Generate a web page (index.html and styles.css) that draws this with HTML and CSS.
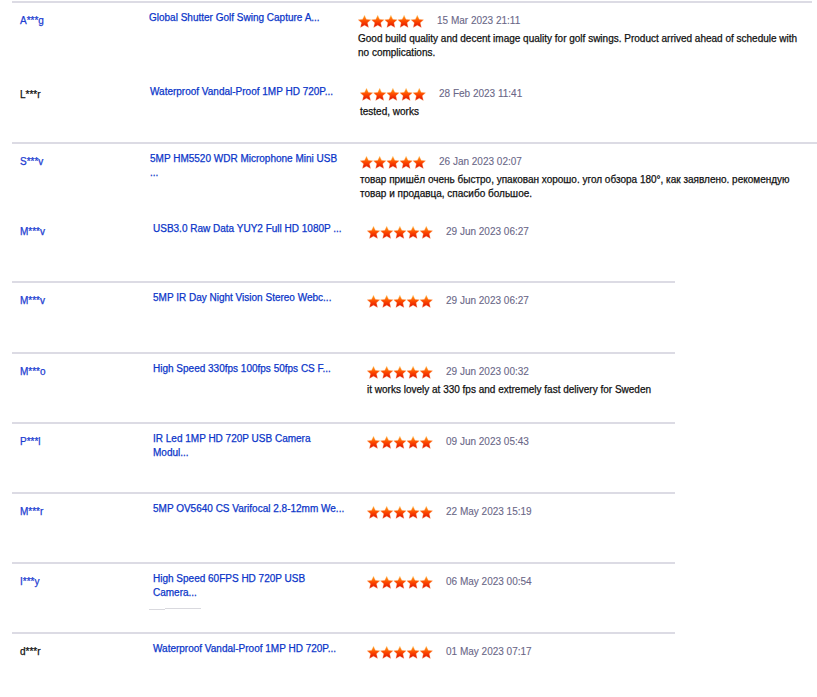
FILE: index.html
```html
<!DOCTYPE html>
<html>
<head>
<meta charset="utf-8">
<link rel="stylesheet" href="styles.css">
</head>
<body>
<svg class="defs" width="0" height="0" aria-hidden="true">
  <defs>
    <linearGradient id="sg" x1="0" y1="0" x2="0" y2="1">
      <stop offset="0" stop-color="#ffa817"/>
      <stop offset="0.45" stop-color="#ff4e00"/>
      <stop offset="1" stop-color="#dc0c00"/>
    </linearGradient>
    <symbol id="star" viewBox="0 0 13 13">
      <polygon points="6.5,0.2 8.4,4.3 12.9,4.8 9.55,7.85 10.55,12.6 6.5,10.2 2.45,12.6 3.45,7.85 0.1,4.8 4.6,4.3" fill="url(#sg)" stroke="#ffc892" stroke-width="0.35" stroke-linejoin="round"/>
    </symbol>
  </defs>
</svg>

<div class="feedback">

  <div class="row row--a lined w-800 h71">
    <div class="buyer">A***g</div>
    <div class="product"><a href="#">Global Shutter Golf Swing Capture A...</a></div>
    <div class="review">
      <div class="meta"><span class="stars"><svg viewBox="0 0 66 13"><use href="#star" x="0" width="13" height="13"/><use href="#star" x="13.2" width="13" height="13"/><use href="#star" x="26.4" width="13" height="13"/><use href="#star" x="39.6" width="13" height="13"/><use href="#star" x="52.8" width="13" height="13"/></svg></span><span class="date">15 Mar 2023 21:11</span></div>
      <p class="text">Good build quality and decent image quality for golf swings. Product arrived ahead of schedule with<br>no complications.</p>
    </div>
  </div>

  <div class="row row--b row--low h70">
    <div class="buyer buyer--dark">L***r</div>
    <div class="product"><a href="#">Waterproof Vandal-Proof 1MP HD 720P...</a></div>
    <div class="review">
      <div class="meta up1"><span class="stars"><svg viewBox="0 0 66 13"><use href="#star" x="0" width="13" height="13"/><use href="#star" x="13.2" width="13" height="13"/><use href="#star" x="26.4" width="13" height="13"/><use href="#star" x="39.6" width="13" height="13"/><use href="#star" x="52.8" width="13" height="13"/></svg></span><span class="date">28 Feb 2023 11:41</span></div>
      <p class="text">tested, works</p>
    </div>
  </div>

  <div class="row row--b lined w-full h70">
    <div class="buyer">S***v</div>
    <div class="product"><a href="#">5MP HM5520 WDR Microphone Mini USB<br>...</a></div>
    <div class="review">
      <div class="meta"><span class="stars"><svg viewBox="0 0 66 13"><use href="#star" x="0" width="13" height="13"/><use href="#star" x="13.2" width="13" height="13"/><use href="#star" x="26.4" width="13" height="13"/><use href="#star" x="39.6" width="13" height="13"/><use href="#star" x="52.8" width="13" height="13"/></svg></span><span class="date">26 Jan 2023 02:07</span></div>
      <p class="text">товар пришёл очень быстро, упакован хорошо. угол обзора 180°, как заявлено. рекомендую<br>товар и продавца, спасибо большое.</p>
    </div>
  </div>

  <div class="row row--c h69">
    <div class="buyer">M***v</div>
    <div class="product"><a href="#">USB3.0 Raw Data YUY2 Full HD 1080P ...</a></div>
    <div class="review">
      <div class="meta"><span class="stars"><svg viewBox="0 0 66 13"><use href="#star" x="0" width="13" height="13"/><use href="#star" x="13.2" width="13" height="13"/><use href="#star" x="26.4" width="13" height="13"/><use href="#star" x="39.6" width="13" height="13"/><use href="#star" x="52.8" width="13" height="13"/></svg></span><span class="date">29 Jun 2023 06:27</span></div>
    </div>
  </div>

  <div class="row row--c lined w-663 h71">
    <div class="buyer">M***v</div>
    <div class="product"><a href="#">5MP IR Day Night Vision Stereo Webc...</a></div>
    <div class="review">
      <div class="meta"><span class="stars"><svg viewBox="0 0 66 13"><use href="#star" x="0" width="13" height="13"/><use href="#star" x="13.2" width="13" height="13"/><use href="#star" x="26.4" width="13" height="13"/><use href="#star" x="39.6" width="13" height="13"/><use href="#star" x="52.8" width="13" height="13"/></svg></span><span class="date">29 Jun 2023 06:27</span></div>
    </div>
  </div>

  <div class="row row--c lined w-663 h70">
    <div class="buyer">M***o</div>
    <div class="product"><a href="#">High Speed 330fps 100fps 50fps CS F...</a></div>
    <div class="review">
      <div class="meta"><span class="stars"><svg viewBox="0 0 66 13"><use href="#star" x="0" width="13" height="13"/><use href="#star" x="13.2" width="13" height="13"/><use href="#star" x="26.4" width="13" height="13"/><use href="#star" x="39.6" width="13" height="13"/><use href="#star" x="52.8" width="13" height="13"/></svg></span><span class="date">29 Jun 2023 00:32</span></div>
      <p class="text">it works lovely at 330 fps and extremely fast delivery for Sweden</p>
    </div>
  </div>

  <div class="row row--c lined w-663 h70">
    <div class="buyer">P***l</div>
    <div class="product"><a href="#">IR Led 1MP HD 720P USB Camera<br>Modul...</a></div>
    <div class="review">
      <div class="meta"><span class="stars"><svg viewBox="0 0 66 13"><use href="#star" x="0" width="13" height="13"/><use href="#star" x="13.2" width="13" height="13"/><use href="#star" x="26.4" width="13" height="13"/><use href="#star" x="39.6" width="13" height="13"/><use href="#star" x="52.8" width="13" height="13"/></svg></span><span class="date">09 Jun 2023 05:43</span></div>
    </div>
  </div>

  <div class="row row--c lined w-663 h70">
    <div class="buyer">M***r</div>
    <div class="product"><a href="#">5MP OV5640 CS Varifocal 2.8-12mm We...</a></div>
    <div class="review">
      <div class="meta"><span class="stars"><svg viewBox="0 0 66 13"><use href="#star" x="0" width="13" height="13"/><use href="#star" x="13.2" width="13" height="13"/><use href="#star" x="26.4" width="13" height="13"/><use href="#star" x="39.6" width="13" height="13"/><use href="#star" x="52.8" width="13" height="13"/></svg></span><span class="date">22 May 2023 15:19</span></div>
    </div>
  </div>

  <div class="row row--c lined w-663 h70">
    <div class="buyer">I***y</div>
    <div class="product"><a href="#">High Speed 60FPS HD 720P USB<br>Camera...</a><span class="smudge"><i></i><i></i></span></div>
    <div class="review">
      <div class="meta"><span class="stars"><svg viewBox="0 0 66 13"><use href="#star" x="0" width="13" height="13"/><use href="#star" x="13.2" width="13" height="13"/><use href="#star" x="26.4" width="13" height="13"/><use href="#star" x="39.6" width="13" height="13"/><use href="#star" x="52.8" width="13" height="13"/></svg></span><span class="date">06 May 2023 00:54</span></div>
    </div>
  </div>

  <div class="row row--c lined w-663 h70">
    <div class="buyer buyer--dark">d***r</div>
    <div class="product"><a href="#">Waterproof Vandal-Proof 1MP HD 720P...</a></div>
    <div class="review">
      <div class="meta"><span class="stars"><svg viewBox="0 0 66 13"><use href="#star" x="0" width="13" height="13"/><use href="#star" x="13.2" width="13" height="13"/><use href="#star" x="26.4" width="13" height="13"/><use href="#star" x="39.6" width="13" height="13"/><use href="#star" x="52.8" width="13" height="13"/></svg></span><span class="date">01 May 2023 07:17</span></div>
    </div>
  </div>

</div>
</body>
</html>
```

FILE: styles.css
```css
html, body {
  margin: 0;
  padding: 0;
  background: #fff;
}

body {
  padding-top: 1px;
  font-family: "Liberation Sans", Arial, sans-serif;
  font-size: 10px;
  line-height: 14px;
  color: #111;
  overflow: hidden;
  -webkit-text-stroke: 0.25px currentColor;
}

.defs {
  position: absolute;
  width: 0;
  height: 0;
}

.feedback {
  display: flex;
  flex-direction: column;
}

.row {
  box-sizing: border-box;
  display: grid;
  margin-left: 12px;
  padding-left: 8px;
  padding-top: 11px;
  border-top: 2px solid transparent;
  align-items: start;
}

.row--low { padding-top: 14px; }

.lined { border-top-color: #dcdbe4; }

.w-800 { width: 800px; }
.w-full { width: calc(100% - 12px); }
.w-663 { width: 663px; }

.h69 { height: 69px; }
.h70 { height: 70px; }
.h71 { height: 71px; }

.row--a { grid-template-columns: 129px 209px 1fr; }
.row--b { grid-template-columns: 130px 210px 1fr; }
.row--c { grid-template-columns: 133px 214px 1fr; }

.buyer {
  color: #1c3dd1;
}

.buyer--dark { color: #111; }

.product {
  margin-top: -3px;
}

.product a {
  color: #0b36c9;
  text-decoration: none;
}

.smudge {
  display: flex;
  align-items: flex-end;
  margin-top: 8px;
  margin-left: -4px;
}

.smudge i {
  display: block;
  height: 1px;
  background: #d9d9de;
}

.smudge i:first-child { width: 16px; }
.smudge i:last-child { width: 36px; margin-bottom: 1px; }

.meta {
  display: flex;
  align-items: center;
  height: 14px;
}

.up1 { margin-top: -1px; }

.stars {
  display: block;
  width: 66px;
  height: 13px;
  margin-right: 13px;
}

.stars svg {
  display: block;
  width: 66px;
  height: 13px;
  overflow: visible;
}

.date {
  color: #6a6787;
  -webkit-text-stroke: 0.1px currentColor;
}

.text {
  margin: 4px 0 0;
  color: #111;
}
```
